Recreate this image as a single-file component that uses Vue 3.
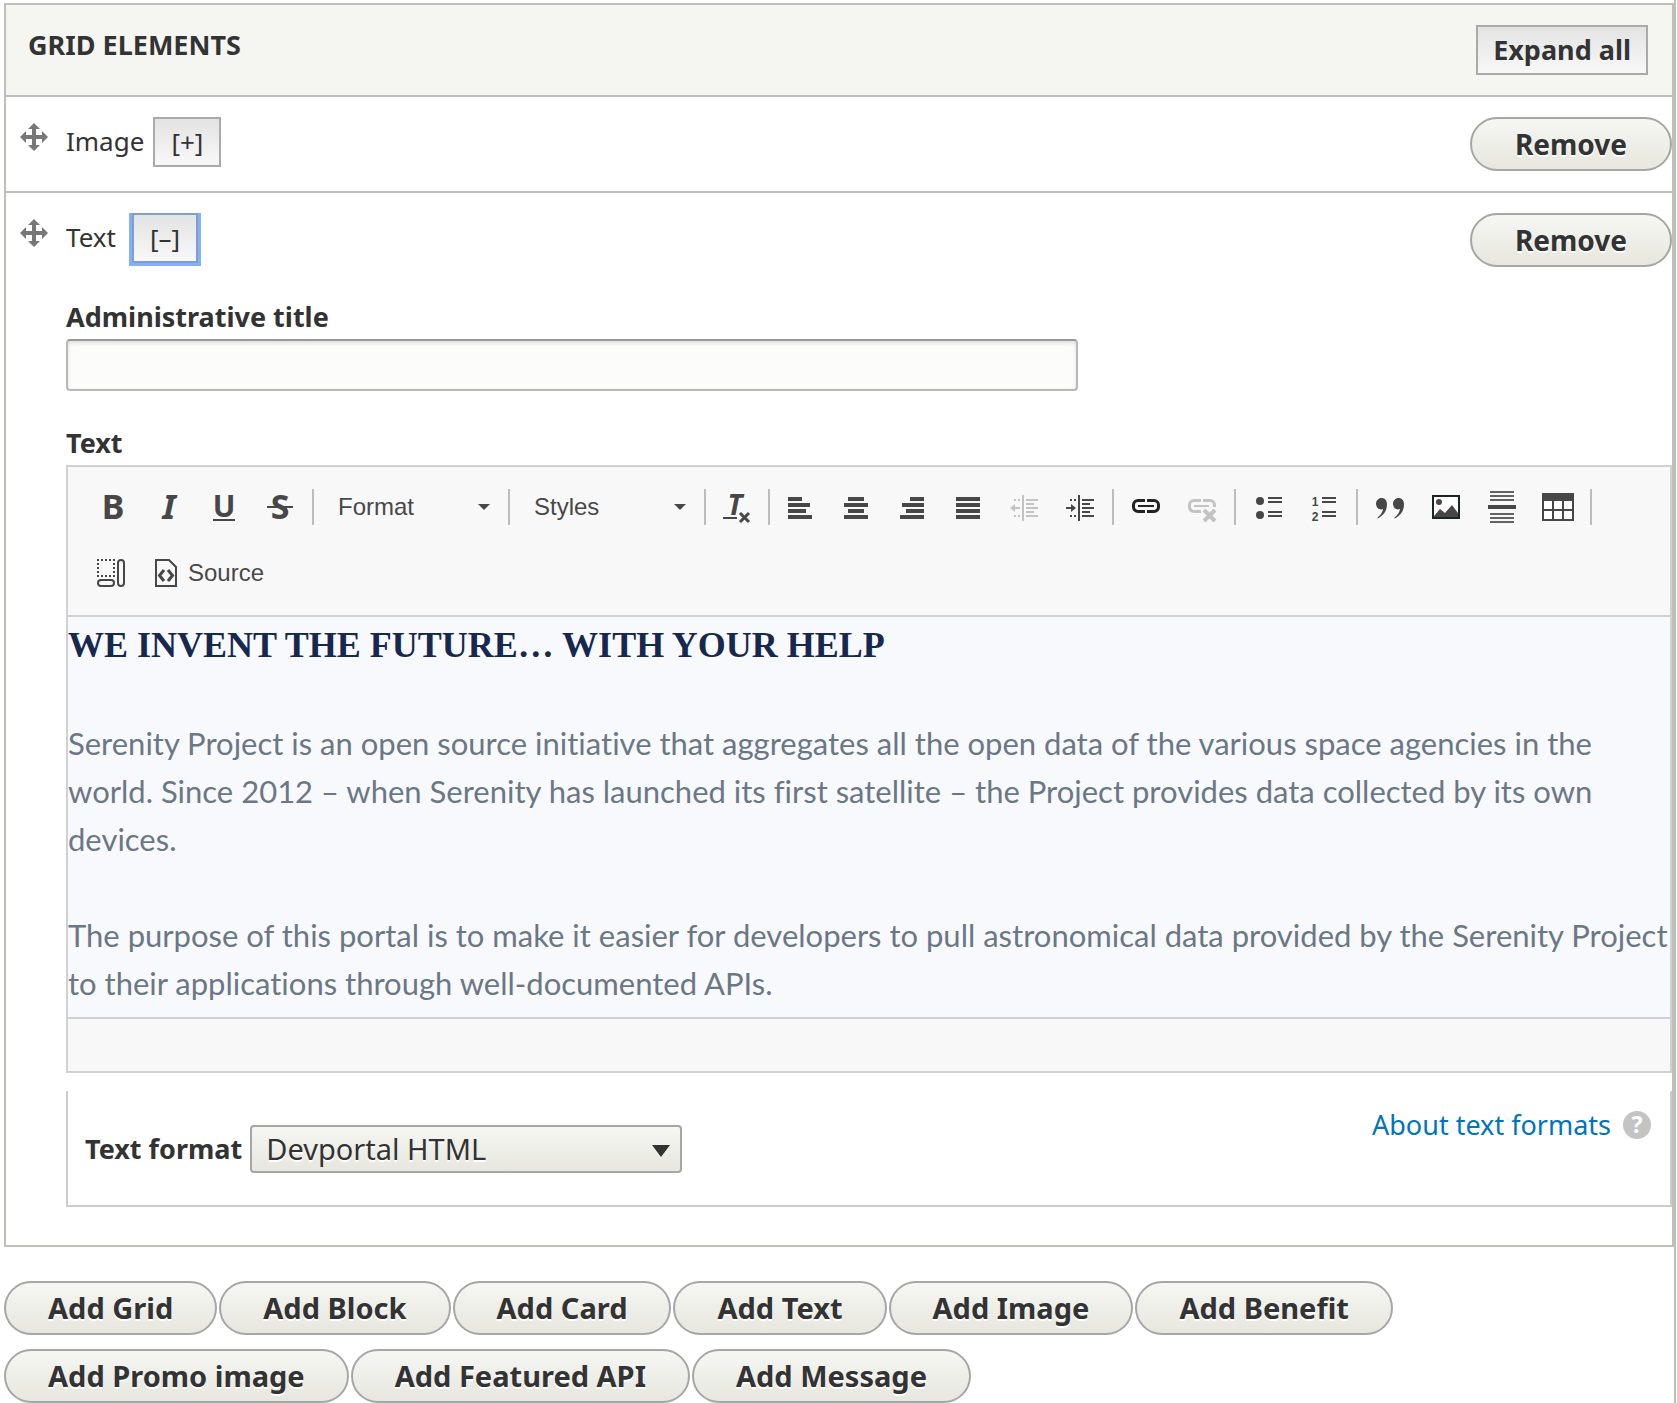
<script setup>
import { ref } from 'vue'

const adminTitle = ref('')
const format = ref('devportal_html')
const addTypes = ['Grid', 'Block', 'Card', 'Text', 'Image', 'Benefit', 'Promo image', 'Featured API', 'Message']
const alignments = [
  { name: 'Align left', bars: [[4, 14], [4, 22], [4, 18], [4, 24]] },
  { name: 'Center', bars: [[8, 16], [4, 24], [8, 16], [4, 24]] },
  { name: 'Align right', bars: [[14, 14], [6, 22], [10, 18], [4, 24]] },
  { name: 'Justify', bars: [[4, 24], [4, 24], [4, 24], [4, 24]] },
]
</script>

<template>
  <main class="page">
    <table class="grid-table">
      <thead>
        <tr>
          <th scope="col">
            <div class="head">
              <span class="head-title">GRID ELEMENTS</span>
              <button type="button" class="square bold">Expand all</button>
            </div>
          </th>
        </tr>
      </thead>
      <tbody>
        <tr>
          <td>
            <div class="item">
              <a href="#" class="handle" aria-label="Drag to re-order">
                <svg viewBox="0 0 28 28"><path d="M14 0l6 6h-4v6h6V8l6 6-6 6v-4h-6v6h4l-6 6-6-6h4v-6H6v4l-6-6 6-6v4h6V6H8z" /></svg>
              </a>
              <span class="item-name">Image</span>
              <button type="button" class="square toggle">[+]</button>
              <button type="button" class="pill remove">Remove</button>
            </div>
          </td>
        </tr>
        <tr>
          <td>
            <div class="item">
              <a href="#" class="handle" aria-label="Drag to re-order">
                <svg viewBox="0 0 28 28"><path d="M14 0l6 6h-4v6h6V8l6 6-6 6v-4h-6v6h4l-6 6-6-6h4v-6H6v4l-6-6 6-6v4h6V6H8z" /></svg>
              </a>
              <span class="item-name">Text</span>
              <button type="button" class="square toggle focused">[–]</button>
              <button type="button" class="pill remove">Remove</button>
            </div>

            <div class="fields">
              <label class="label" for="admin-title">Administrative title</label>
              <input id="admin-title" v-model="adminTitle" class="text-input" type="text">

              <span id="text-label" class="label">Text</span>
              <div class="editor" role="group" aria-labelledby="text-label">
                <div class="toolbar" role="toolbar">
                  <div class="group">
                    <button type="button" class="tool" aria-label="Bold">
                      <svg viewBox="0 0 32 32"><text x="17" y="28" class="glyph" font-size="34">B</text></svg>
                    </button>
                    <button type="button" class="tool" aria-label="Italic">
                      <svg viewBox="0 0 32 32"><text x="17" y="28" class="glyph italic" font-size="34">I</text></svg>
                    </button>
                    <button type="button" class="tool" aria-label="Underline">
                      <svg viewBox="0 0 32 32"><text x="16" y="26" class="glyph" font-size="30">U</text><path d="M5 28h22v2H5z" /></svg>
                    </button>
                    <button type="button" class="tool" aria-label="Strikethrough">
                      <svg viewBox="0 0 32 32"><text x="16" y="28" class="glyph" font-size="34">S</text><path d="M3 15h26v2H3z" /></svg>
                    </button>
                  </div>
                  <span class="sep"></span>
                  <button type="button" class="combo">Format<svg viewBox="0 0 12 6"><path d="M0 0h12L6 6z" /></svg></button>
                  <span class="sep"></span>
                  <button type="button" class="combo">Styles<svg viewBox="0 0 12 6"><path d="M0 0h12L6 6z" /></svg></button>
                  <span class="sep"></span>
                  <button type="button" class="tool" aria-label="Remove format">
                    <svg viewBox="0 0 32 32">
                      <text x="13" y="24" class="glyph italic" font-size="28">T</text>
                      <path d="M1 26h14v2H1z" />
                      <path class="line" stroke-width="3" d="M18 22l9 9M27 22l-9 9" />
                    </svg>
                  </button>
                  <span class="sep tight"></span>
                  <div class="group">
                    <button v-for="a in alignments" :key="a.name" type="button" class="tool" :aria-label="a.name">
                      <svg viewBox="0 0 32 32">
                        <rect v-for="(b, i) in a.bars" :key="i" :x="b[0]" :y="6 + i * 6" :width="b[1]" height="4" />
                      </svg>
                    </button>
                    <button type="button" class="tool" aria-label="Decrease indent" disabled>
                      <svg viewBox="0 0 32 32">
                        <path d="M14 4h2v26h-2zM18 8h12v2H18zM18 12h8v2h-8zM18 16h12v2H18zM18 20h8v2h-8zM18 24h12v2H18zM6 8h2v2H6zM10 8h2v2h-2zM6 24h2v2H6zM10 24h2v2h-2zM2 17l5-4v3h5v2H7v3z" />
                      </svg>
                    </button>
                    <button type="button" class="tool" aria-label="Increase indent">
                      <svg viewBox="0 0 32 32">
                        <path d="M14 4h2v26h-2zM18 8h12v2H18zM18 12h8v2h-8zM18 16h12v2H18zM18 20h8v2h-8zM18 24h12v2H18zM6 8h2v2H6zM10 8h2v2h-2zM6 24h2v2H6zM10 24h2v2h-2zM12 17l-5-4v3H2v2h5v3z" />
                      </svg>
                    </button>
                  </div>
                  <span class="sep"></span>
                  <div class="group">
                    <button type="button" class="tool" aria-label="Link">
                      <svg viewBox="0 0 32 32" class="chain">
                        <path class="line" stroke-width="3" d="M15 9.500H8a4.500 4.500 0 0 0-4.500 4.500v2A4.500 4.500 0 0 0 8 20.500h7M17 9.500h7a4.500 4.500 0 0 1 4.500 4.500v2a4.500 4.500 0 0 1-4.500 4.500h-7" />
                        <path class="line" stroke-width="2" d="M8 15h16" />
                      </svg>
                    </button>
                    <button type="button" class="tool" aria-label="Unlink" disabled>
                      <svg viewBox="0 0 32 32">
                        <path class="line" stroke-width="3" d="M15 9.500H8a4.500 4.500 0 0 0-4.500 4.500v2A4.500 4.500 0 0 0 8 20.500h7M17 9.500h7a4.500 4.500 0 0 1 4.500 4.500v2" />
                        <path class="line" stroke-width="2" d="M8 15h15" />
                        <path class="line" stroke-width="4" d="M18 19l11 11M29 19L18 30" />
                      </svg>
                    </button>
                  </div>
                  <span class="sep"></span>
                  <div class="group">
                    <button type="button" class="tool" aria-label="Bulleted list">
                      <svg viewBox="0 0 32 32">
                        <circle cx="8" cy="10" r="4" /><circle cx="8" cy="24" r="4" />
                        <path d="M16 6h14v2H16zM16 10h14v2H16zM16 20h14v2H16zM16 24h14v2H16z" />
                      </svg>
                    </button>
                    <button type="button" class="tool" aria-label="Numbered list">
                      <svg viewBox="0 0 32 32">
                        <text x="7" y="15" class="glyph number" font-size="12">1</text>
                        <text x="7" y="30" class="glyph number" font-size="12">2</text>
                        <path d="M14 6h14v2H14zM14 10h14v2H14zM14 20h14v2H14zM14 24h14v2H14z" />
                      </svg>
                    </button>
                  </div>
                  <span class="sep"></span>
                  <div class="group">
                    <button type="button" class="tool" aria-label="Block quote">
                      <svg viewBox="0 0 32 32">
                        <path d="M7.500 7c3.500 0 5.500 2.500 5.500 6.500 0 6.500-4 11.500-9.500 14v-1c3-2 5-5 5.500-8.500-4 1.500-7-1.500-7-5.500C2 9.500 4.500 7 7.500 7z" />
                        <path d="M24.500 7c3.500 0 5.500 2.500 5.500 6.500 0 6.500-4 11.500-9.500 14v-1c3-2 5-5 5.500-8.500-4 1.500-7-1.500-7-5.500 0-3 2.500-5.500 5.500-5.500z" />
                      </svg>
                    </button>
                    <button type="button" class="tool" aria-label="Image">
                      <svg viewBox="0 0 32 32">
                        <rect x="3" y="5" width="26" height="22" fill="#fff" stroke="#1c2526" stroke-width="2" />
                        <circle cx="9" cy="11" r="3" />
                        <path d="M4 26v-1l6-7 5 4 7-8 6 8v4z" />
                      </svg>
                    </button>
                    <button type="button" class="tool" aria-label="Horizontal line">
                      <svg viewBox="0 0 32 32">
                        <path fill="#636363" d="M4 0h24v2H4zM4 4h24v2H4zM4 8h24v2H4zM4 22h24v2H4zM4 26h24v2H4zM4 30h24v2H4z" />
                        <path d="M2 14h28v4H2z" />
                      </svg>
                    </button>
                    <button type="button" class="tool" aria-label="Table">
                      <svg viewBox="0 0 32 32">
                        <path fill="#fff" d="M1 3h30v26H1z" />
                        <path d="M0 2h32v8H0zM0 18h32v2H0zM0 28h32v2H0zM0 10h2v18H0zM10 10h2v18h-2zM20 10h2v18h-2zM30 10h2v18h-2z" />
                      </svg>
                    </button>
                  </div>
                  <span class="sep"></span>
                  <div class="group">
                    <button type="button" class="tool" aria-label="Show blocks">
                      <svg viewBox="0 0 32 32">
                        <rect class="line" x="2" y="3" width="16" height="16" stroke-width="2" stroke-dasharray="2 2" stroke-dashoffset="1" />
                        <rect class="line" x="2" y="23" width="16" height="6" rx="3" stroke-width="2" />
                        <rect class="line" x="22" y="3" width="6" height="26" rx="3" stroke-width="2" />
                      </svg>
                    </button>
                    <button type="button" class="tool source">
                      <svg viewBox="0 0 32 32">
                        <path class="line" stroke-width="2" d="M6 3h13l7 7v19H6z" />
                        <path class="line" stroke-width="3" d="M14 13l-4.500 5.500L14 24M18 13l4.500 5.500L18 24" />
                      </svg>
                      Source
                    </button>
                  </div>
                </div>
                <div class="content">
                  <h2>WE INVENT THE FUTURE… WITH YOUR HELP</h2>
                  <p>Serenity Project is an open source initiative that aggregates all the open data of the various space agencies in the world. Since 2012 – when Serenity has launched its first satellite – the Project provides data collected by its own devices.</p>
                  <p>The purpose of this portal is to make it easier for developers to pull astronomical data provided by the Serenity Project to their applications through well-documented APIs.</p>
                </div>
                <div class="status"></div>
              </div>

              <div class="format">
                <div class="format-pick">
                  <label for="text-format">Text format</label>
                  <div class="select-box">
                    <select id="text-format" v-model="format">
                      <option value="devportal_html">Devportal HTML</option>
                    </select>
                    <svg viewBox="0 0 18 12"><path d="M0 0h18L9 12z" /></svg>
                  </div>
                </div>
                <a href="#" class="help">
                  About text formats
                  <svg viewBox="0 0 30 30"><circle cx="15" cy="15" r="14" /><text x="15" y="23">?</text></svg>
                </a>
              </div>
            </div>
          </td>
        </tr>
      </tbody>
    </table>

    <div class="add-list">
      <button v-for="type in addTypes" :key="type" type="button" class="pill add">Add {{ type }}</button>
    </div>
  </main>
</template>

<style>
body {
  margin: 0;
  background: #fff;
}
</style>

<style scoped>
.page {
  box-sizing: border-box;
  margin-right: 1px;
  padding: 3px 0 0 4px;
  border-right: 2px solid #bfbfba;
  color: #333;
  font-family: "Noto Sans", "Open Sans", sans-serif;
  font-size: 26px;
  line-height: 36px;
}
button,
input,
select {
  box-sizing: border-box;
  margin: 0;
  color: inherit;
  font: inherit;
}
svg {
  display: block;
  flex: none;
}
.grid-table {
  width: 100%;
  border: 2px solid #bfbfba;
  border-spacing: 0;
}
th,
td {
  padding: 0;
  text-align: left;
}
td {
  border-top: 2px solid #bfbfba;
}
th {
  background: #f5f5f2;
}
.head {
  display: flex;
  justify-content: space-between;
  align-items: flex-start;
  padding: 20px 24px 20px 22px;
  font-size: 27px;
}
.head-title {
  line-height: 40px;
}
.square {
  height: 50px;
  padding: 0 15px;
  border: 2px solid #aaa;
  background: linear-gradient(#e3e3e3, #f8f8f8);
  line-height: 44px;
}
.bold {
  font-weight: 700;
}
.toggle {
  padding: 0 16px;
}
.item {
  display: flex;
  align-items: flex-start;
  padding: 20px 0 20px 14px;
}
.handle {
  width: 28px;
  margin: 6px 18px 0 0;
  fill: #777;
}
.item-name {
  min-width: 57px;
  margin-right: 9px;
  line-height: 48px;
}
.focused {
  border-color: #7d9fcc;
  box-shadow: 0 0 0 3px #85b0f7;
  clip-path: inset(0 -4px -4px);
}
.pill {
  height: 54px;
  padding: 0 42px;
  border: 2px solid #a6a6a6;
  border-radius: 27px;
  background: linear-gradient(#f6f6f3, #e7e7df);
  font-size: 29px;
  font-weight: 700;
  line-height: 48px;
  text-shadow: 0 2px #fff;
}
.remove {
  min-width: 202px;
  margin-left: auto;
  font-size: 28px;
}
.fields {
  display: flex;
  flex-direction: column;
  align-items: stretch;
  padding: 12px 0 38px 60px;
}
.label {
  margin-bottom: 4px;
  font-size: 27px;
  font-weight: 700;
}
.text-input {
  width: 1012px;
  max-width: 100%;
  height: 52px;
  margin-bottom: 34px;
  padding: 0 14px;
  border: 2px solid #b8b8b8;
  border-top-color: #999;
  border-radius: 4px;
  background: #fcfcfa;
  box-shadow: inset 0 2px 4px rgba(0, 0, 0, 0.12);
}
.editor {
  border: 2px solid #d1d1d1;
  color: #484848;
}
.toolbar {
  display: flex;
  flex-wrap: wrap;
  align-items: center;
  row-gap: 16px;
  padding: 15px 16px 17px;
  border-bottom: 2px solid #d1d1d1;
  background: #f8f8f8;
  font-family: "Liberation Sans", Arial, sans-serif;
  font-size: 24px;
}
.group {
  display: flex;
}
.tool,
.combo {
  display: flex;
  align-items: center;
  justify-content: center;
  width: 56px;
  height: 50px;
  padding: 0;
  border: 0;
  background: none;
}
.tool svg {
  width: 32px;
  height: 32px;
  overflow: visible;
  fill: #474747;
  stroke: none;
}
.tool .line {
  fill: none;
  stroke: #474747;
}
.tool .glyph {
  font-family: "Noto Sans", sans-serif;
  font-weight: 700;
  text-anchor: middle;
}
.tool .number {
  font-family: "Liberation Sans", Arial, sans-serif;
}
.tool .italic {
  font-style: italic;
}
.tool:disabled svg {
  fill: #c3c3c3;
}
.tool:disabled .line {
  stroke: #c3c3c3;
}
.tool .chain .line {
  stroke: #222;
}
.combo {
  justify-content: space-between;
  width: 186px;
  padding: 0 14px 0 20px;
}
.combo svg {
  width: 12px;
  height: 6px;
  fill: #474747;
}
.source {
  gap: 6px;
  width: auto;
  padding: 0 10px;
}
.sep {
  width: 2px;
  height: 36px;
  margin: 0 4px;
  background: #bcbcbc;
}
.tight {
  margin: 0 2px;
}
.content {
  padding-bottom: 10px;
  border-bottom: 2px solid #d1d1d1;
  background: #f8f9fd;
  color: #6b7785;
  font-family: Lato, sans-serif;
  font-size: 31px;
  font-variant-ligatures: no-common-ligatures;
  line-height: 48px;
}
.content h2 {
  margin: 0 0 46px;
  color: #17284f;
  font-family: "Liberation Serif", "Times New Roman", serif;
  font-size: 36px;
  line-height: 56px;
}
.content p {
  margin: 0;
}
.content p + p {
  margin-top: 48px;
}
.status {
  height: 52px;
  background: #f8f8f8;
}
.format {
  display: flex;
  justify-content: space-between;
  align-items: flex-start;
  margin-top: 18px;
  padding: 14px 18px 32px 17px;
  border: 2px solid #ccc;
  border-top: 0;
}
.format-pick {
  display: flex;
  align-items: center;
  gap: 8px;
  margin-top: 20px;
  font-size: 27px;
  font-weight: 700;
}
.select-box {
  position: relative;
}
.select-box select {
  display: block;
  width: 432px;
  height: 48px;
  padding: 0 14px;
  border: 2px solid #a6a6a6;
  border-radius: 4px;
  background: linear-gradient(#f6f6f3, #e7e7df);
  appearance: none;
  font-size: 29px;
  font-weight: 400;
  text-shadow: 0 2px #fff;
}
.select-box svg {
  position: absolute;
  top: 20px;
  right: 12px;
  width: 18px;
  fill: #333;
  pointer-events: none;
}
.help {
  display: flex;
  align-items: center;
  gap: 11px;
  color: #0074bd;
  font-size: 27px;
  line-height: 40px;
  text-decoration: none;
}
.help svg {
  width: 30px;
  overflow: visible;
  fill: #c4c4c4;
}
.help text {
  fill: #fff;
  font-size: 23px;
  font-weight: 700;
  text-anchor: middle;
}
.add-list {
  display: flex;
  flex-wrap: wrap;
  gap: 14px 2px;
  margin-top: 34px;
}
</style>
